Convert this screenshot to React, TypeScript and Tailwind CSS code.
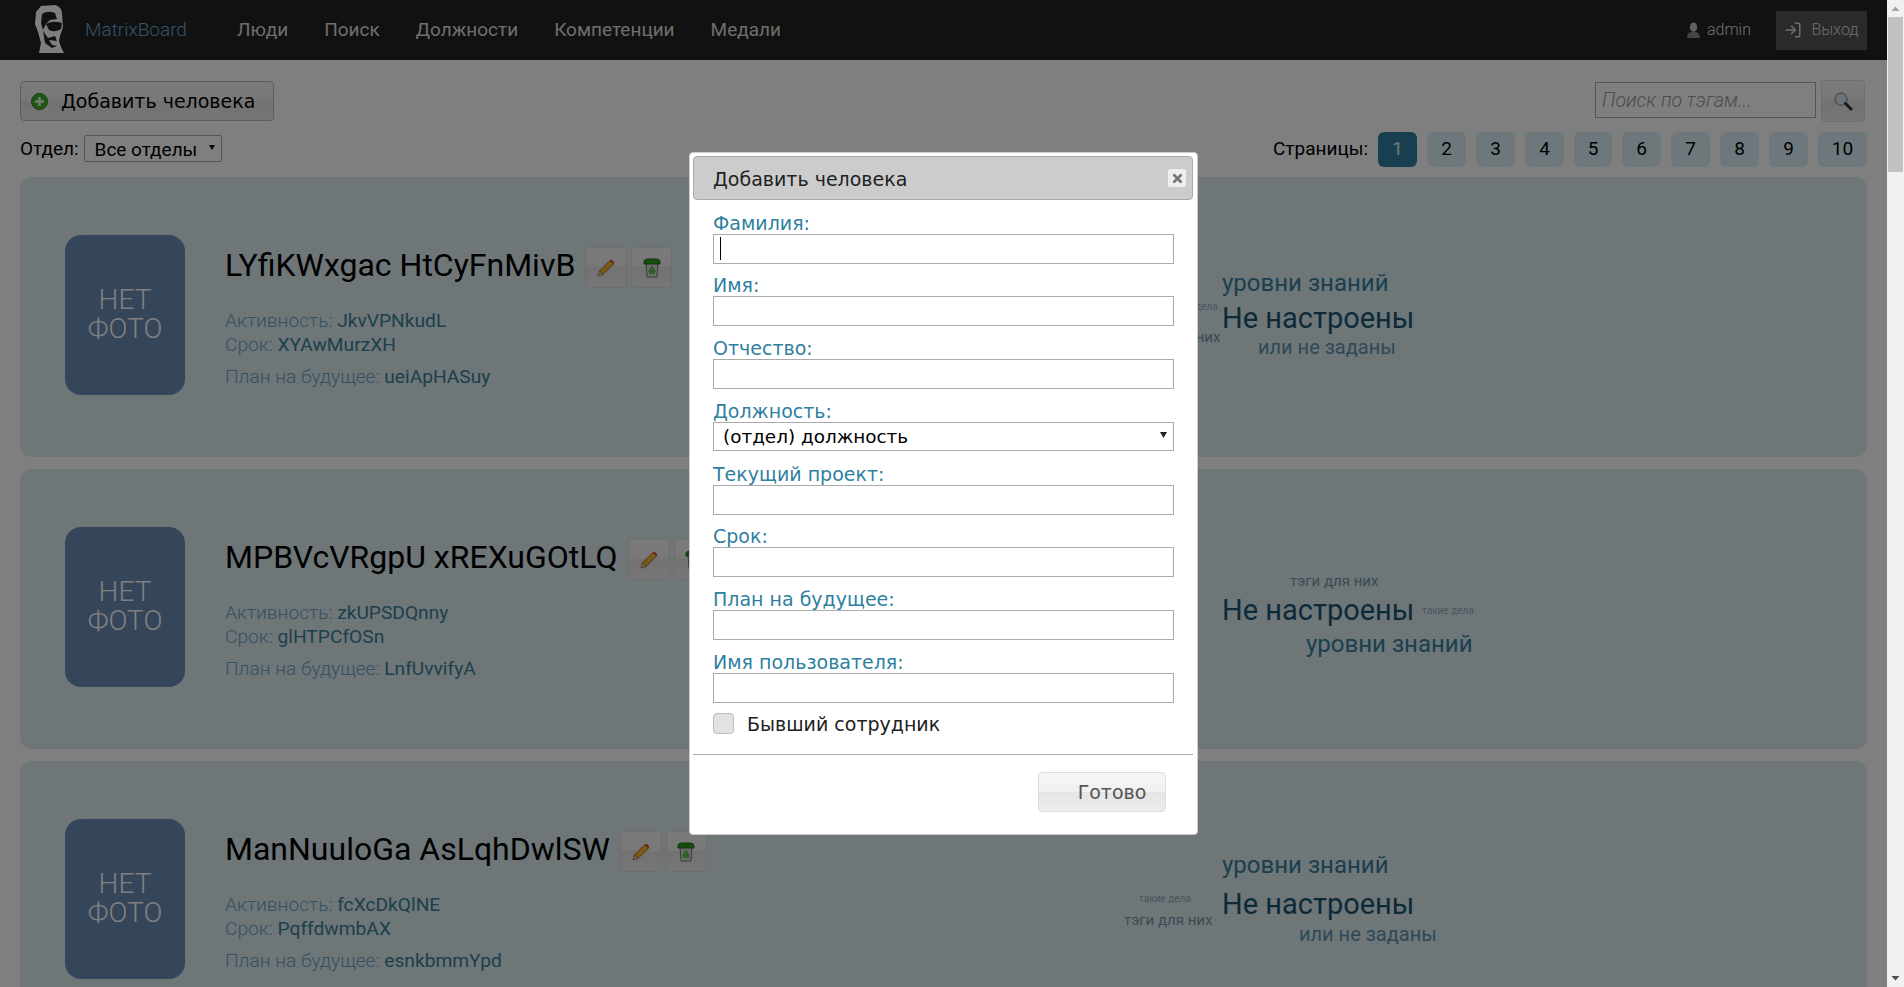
import React from 'react';
import { LogIn, X } from 'lucide-react';

const roboto = "font-['Roboto',sans-serif]";
const dejavu = "font-['DejaVu_Sans',sans-serif]";
const stepButton = 'bg-[linear-gradient(#f6f6f6_0%,#f0f0f0_50%,#e4e4e4_50%,#eeeeee_100%)]';

const navItems = ['Люди', 'Поиск', 'Должности', 'Компетенции', 'Медали'];
const pages = ['1', '2', '3', '4', '5', '6', '7', '8', '9', '10'];

const Logo = () => (
  <svg width="34" height="50" viewBox="0 0 34 50" className="shrink-0">
    <path d="M8 1L22 0Q29 2 29 9L30 22L27 31L26 36L28 42L31 48L6 48L8 38L5 27L2 19L3 7Z" fill="#fff" />
    <path d="M9 9Q15 5 22 8L24 14L17 15L13 19L10 25L8 18Z" fill="#222" />
    <path d="M13 19Q20 15 29 18L28 24Q22 28 16 25Z" fill="#222" />
    <path d="M10 26L15 33L22 31L24 36L16 35L19 40L24 41L19 43L12 38Z" fill="#222" />
  </svg>
);

const UserIcon = () => (
  <svg width="13" height="17" viewBox="0 0 14 18">
    <ellipse cx="7" cy="5.5" rx="4" ry="5" fill="#c0c0c0" />
    <path d="M0 17Q0 11 5 10.5L9 10.5Q14 11 14 17Z" fill="#8a8a8a" />
  </svg>
);

const PlusIcon = () => (
  <svg width="17" height="17" viewBox="0 0 17 17">
    <circle cx="8.5" cy="8.5" r="8" fill="#3fae2a" stroke="#2b7a1c" />
    <path d="M8.5 4v9M4 8.5h9" stroke="#e9fbe0" strokeWidth="2.4" />
  </svg>
);

const SearchIcon = () => (
  <svg width="20" height="20" viewBox="0 0 20 20">
    <circle cx="8" cy="8" r="6" fill="#d8e8f4" stroke="#a9a9a9" strokeWidth="1.6" />
    <path d="M12.5 12.5L18 18" stroke="#333" strokeWidth="3" strokeLinecap="round" />
  </svg>
);

const PencilIcon = () => (
  <svg width="18" height="18" viewBox="0 0 18 18">
    <path d="M13 1.5L16.5 5L6 15.5L2.5 12Z" fill="#f2b632" stroke="#a8681a" />
    <path d="M13 1.5L14.5 0.8L17.2 3.5L16.5 5Z" fill="#e2322a" />
    <path d="M2.5 12L6 15.5L1 17Z" fill="#f3d9a8" stroke="#6b4a1c" strokeWidth="0.6" />
  </svg>
);

const TrashIcon = () => (
  <svg width="18" height="20" viewBox="0 0 18 20">
    <path d="M3 5H15L14 19H4Z" fill="#d6d6d6" stroke="#777" />
    <path d="M1 4Q1 1 5 1H13Q17 1 17 4V6H1Z" fill="#2f9a1e" stroke="#1c6a10" />
    <path d="M9 9L11.5 13H6.5Z" fill="none" stroke="#3fae2a" strokeWidth="1.4" />
    <path d="M6 15h6" stroke="#3fae2a" strokeWidth="1.4" />
  </svg>
);

type Tag = { text: string; pos: string; size: string };

type Person = {
  name: string;
  activity: string;
  term: string;
  plan: string;
  tags: Tag[];
};

const people: Person[] = [
  {
    name: 'LYfiKWxgac HtCyFnMivB',
    activity: 'JkvVPNkudL',
    term: 'XYAwMurzXH',
    plan: 'ueiApHASuy',
    tags: [
      { text: 'уровни знаний', pos: 'left-[1202px] top-[94px]', size: 'text-[24px] text-[#357f9f]' },
      { text: 'Не настроены', pos: 'left-[1202px] top-[127px]', size: 'text-[29px] text-[#1a5470]' },
      { text: 'или не заданы', pos: 'left-[1238px] top-[160px]', size: 'text-[20px] text-[#5f92ae]' },
      { text: 'такие дела', pos: 'left-[1146px] top-[125px]', size: 'text-[10px] text-[#8fb0c0]' },
      { text: 'тэги для них', pos: 'left-[1112px] top-[153px]', size: 'text-[15px] text-[#7296aa]' },
    ],
  },
  {
    name: 'MPBVcVRgpU xREXuGOtLQ',
    activity: 'zkUPSDQnny',
    term: 'glHTPCfOSn',
    plan: 'LnfUvvifyA',
    tags: [
      { text: 'тэги для них', pos: 'left-[1270px] top-[105px]', size: 'text-[15px] text-[#7296aa]' },
      { text: 'Не настроены', pos: 'left-[1202px] top-[127px]', size: 'text-[29px] text-[#1a5470]' },
      { text: 'такие дела', pos: 'left-[1402px] top-[137px]', size: 'text-[10px] text-[#8fb0c0]' },
      { text: 'уровни знаний', pos: 'left-[1286px] top-[163px]', size: 'text-[24px] text-[#357f9f]' },
    ],
  },
  {
    name: 'ManNuuloGa AsLqhDwlSW',
    activity: 'fcXcDkQlNE',
    term: 'PqffdwmbAX',
    plan: 'esnkbmmYpd',
    tags: [
      { text: 'уровни знаний', pos: 'left-[1202px] top-[92px]', size: 'text-[24px] text-[#357f9f]' },
      { text: 'Не настроены', pos: 'left-[1202px] top-[129px]', size: 'text-[29px] text-[#1a5470]' },
      { text: 'или не заданы', pos: 'left-[1279px] top-[163px]', size: 'text-[20px] text-[#5f92ae]' },
      { text: 'такие дела', pos: 'left-[1119px] top-[133px]', size: 'text-[10px] text-[#8fb0c0]' },
      { text: 'тэги для них', pos: 'left-[1104px] top-[152px]', size: 'text-[15px] text-[#7296aa]' },
    ],
  },
];

const PersonCard: React.FC<{ person: Person }> = ({ person }) => (
  <div className="relative mb-3 flex h-[280px] shrink-0 rounded-[12px] bg-[#dcecf0] pl-[45px] pt-[58px]">
    <div className="flex h-[160px] w-[120px] shrink-0 items-center justify-center rounded-[16px] bg-[#6a8ab4] pb-[2px] text-center text-[28px] font-light leading-[29px] text-white">
      <p>
        НЕТ
        <br />
        ФОТО
      </p>
    </div>
    <div className="ml-10 flex flex-col">
      <div className="mt-3 flex h-[41px] items-center">
        <h2 className="pb-1 text-[32px] font-normal leading-[41px] text-black">{person.name}</h2>
        <button className={`ml-[10px] flex h-[41px] w-[42px] items-center justify-center rounded-[4px] border border-[#ddd] ${stepButton}`}>
          <PencilIcon />
        </button>
        <button className={`ml-1 flex h-[41px] w-[41px] items-center justify-center rounded-[4px] border border-[#ddd] ${stepButton}`}>
          <TrashIcon />
        </button>
      </div>
      <div className="mt-[21px] text-[19.2px] font-light leading-6 text-[#6da2c4]">
        <div>
          Активность: <span className="font-normal text-[#3a8098]">{person.activity}</span>
        </div>
        <div>
          Срок: <span className="font-normal text-[#3a8098]">{person.term}</span>
        </div>
        <div className="mt-2">
          План на будущее: <span className="font-normal text-[#3a8098]">{person.plan}</span>
        </div>
      </div>
    </div>
    {person.tags.map((tag) => (
      <span key={tag.text} className={`absolute whitespace-nowrap font-normal leading-none ${tag.pos} ${tag.size}`}>
        {tag.text}
      </span>
    ))}
  </div>
);

const fields = ['Фамилия:', 'Имя:', 'Отчество:', 'Должность:', 'Текущий проект:', 'Срок:', 'План на будущее:', 'Имя пользователя:'];

const AddPersonModal = () => (
  <div className={`absolute left-[689px] top-[152px] z-20 h-[683px] w-[509px] rounded-[4px] border border-[#ccc] bg-white pl-[3px] pr-[4px] pt-[3px] ${dejavu}`}>
    <div className="flex h-[44px] items-center justify-between rounded-[4px] border border-[#aaa] bg-[#cccccc] pl-[19px] pr-[6px]">
      <span className="pt-[2px] text-[19px] text-[#222]">Добавить человека</span>
      <button className="flex h-[18px] w-[18px] items-center justify-center rounded-[2px] bg-[#eee]">
        <X size={13} strokeWidth={5} color="#777" />
      </button>
    </div>
    <div className="mt-[1px] pl-5 pr-[19px]">
      {fields.map((label, i) => (
        <div key={label} className="h-[62.71px]">
          <label className="flex h-[32.71px] items-end text-[19px] leading-[22px] text-[#2f7f9f]">{label}</label>
          {label === 'Должность:' ? (
            <div className="relative">
              <select className="h-[29px] w-full appearance-none rounded-none border border-[#aaa] bg-white pl-[9px] text-[18.4px] text-black outline-none">
                <option>(отдел) должность</option>
              </select>
              <svg width="7" height="6" viewBox="0 0 7 6" className="absolute right-[7px] top-[10px]">
                <path d="M0 0H7L3.5 6Z" fill="#222" />
              </svg>
            </div>
          ) : (
            <div className="relative">
              <input className="block h-[30px] w-full border border-[#aaa] bg-white outline-none" />
              {i === 0 && <div className="absolute left-[7px] top-[3px] h-[23px] w-px bg-black" />}
            </div>
          )}
        </div>
      ))}
      <div className="mt-[10px] flex h-[21px] items-center">
        <span className="h-[21px] w-[21px] rounded-[4px] border border-[#bbb] bg-[#e2e2e2]" />
        <span className="ml-[13px] pt-[2px] text-[19px] text-[#222]">Бывший сотрудник</span>
      </div>
    </div>
    <div className="mt-5 border-t border-[#aaa]" />
    <div className="flex justify-end pr-[27px] pt-[17px]">
      <button className={`h-10 w-[128px] rounded-[4px] border border-[#ddd] pl-[20px] pt-[2px] text-[19px] text-[#555] ${stepButton}`}>
        Готово
      </button>
    </div>
  </div>
);

const Scrollbar = () => (
  <div className="flex w-[17px] shrink-0 flex-col items-center bg-[#f1f1f1]">
    <svg width="9" height="17" viewBox="0 0 9 17" className="shrink-0">
      <path d="M0.5 11L4.5 6.5L8.5 11Z" fill="#a3a3a3" />
    </svg>
    <div className="h-[155px] w-[15px] bg-[#c1c1c1]" />
    <div className="flex-1" />
    <svg width="9" height="17" viewBox="0 0 9 17" className="shrink-0">
      <path d="M0.5 6L4.5 10.5L8.5 6Z" fill="#505050" />
    </svg>
  </div>
);

const App: React.FC = () => {
  return (
    <div className={`flex h-[987px] w-[1904px] overflow-hidden bg-white ${roboto}`}>
      <div className="relative w-[1887px] overflow-hidden">
        <header className="flex h-[60px] items-center bg-[#222] pl-[33px] pr-5">
          <Logo />
          <span className="ml-[18px] text-[19px] font-light text-[#6ea6d0]">MatrixBoard</span>
          <nav className="ml-[50px] flex gap-9 text-[19px] text-[#dddddd]">
            {navItems.map((item) => (
              <a key={item}>{item}</a>
            ))}
          </nav>
          <div className="ml-auto flex items-center">
            <UserIcon />
            <span className="ml-[7px] text-[16px] font-light text-[#ddd]">admin</span>
            <button className="ml-[25px] flex h-[39px] w-[91px] items-center justify-center gap-[9px] bg-[#555] text-[16px] font-light text-[#ddd]">
              <LogIn size={18} />
              Выход
            </button>
          </div>
        </header>

        <main className="flex flex-col px-5">
          <div className="flex items-center pt-5">
            <button className={`flex h-10 w-[254px] items-center rounded-[4px] border border-[#bbb] pl-[10px] text-[19px] text-black ${dejavu} ${stepButton}`}>
              <PlusIcon />
              <span className="ml-[13px]">Добавить человека</span>
            </button>
            <input
              placeholder="Поиск по тэгам..."
              className="mb-[2px] ml-auto h-9 w-[221px] border border-[#aaa] bg-white px-[6px] text-[19.5px] font-light italic outline-none placeholder:text-[#999]"
            />
            <button className={`ml-[5px] mr-[2px] flex h-[42px] w-[44px] items-center justify-center rounded-[4px] border border-[#ddd] ${stepButton}`}>
              <SearchIcon />
            </button>
          </div>

          <div className="mt-[10px] flex h-[35px] items-center text-[19px] text-black">
            <span>Отдел:</span>
            <div className="relative ml-[5px]">
              <select className="h-[27px] w-[138px] appearance-none rounded-[2px] border border-[#aaa] bg-white pl-[10px] text-[19px] text-black outline-none">
                <option>Все отделы</option>
              </select>
              <svg width="6" height="5" viewBox="0 0 6 5" className="absolute right-[7px] top-[10px]">
                <path d="M0 0H6L3 5Z" fill="#111" />
              </svg>
            </div>
            <span className="ml-auto mr-[10px]">Страницы:</span>
            <div className="flex gap-[10px]">
              {pages.map((p) => (
                <a
                  key={p}
                  className={`flex h-[35px] items-center justify-center rounded-[6px] ${p === '10' ? 'w-[49px]' : p === '5' ? 'w-[38px]' : 'w-[39px]'} ${p === '1' ? 'bg-[#2f7f9f] text-[#eee]' : 'bg-[#dcf0f8] text-black'}`}
                >
                  {p}
                </a>
              ))}
            </div>
          </div>

          <div className="mt-[10px] flex flex-col">
            {people.map((person) => (
              <PersonCard key={person.name} person={person} />
            ))}
          </div>
        </main>

        <div className="absolute inset-0 z-10 bg-black/50" />
        <AddPersonModal />
      </div>
      <Scrollbar />
    </div>
  );
};

export default App;
